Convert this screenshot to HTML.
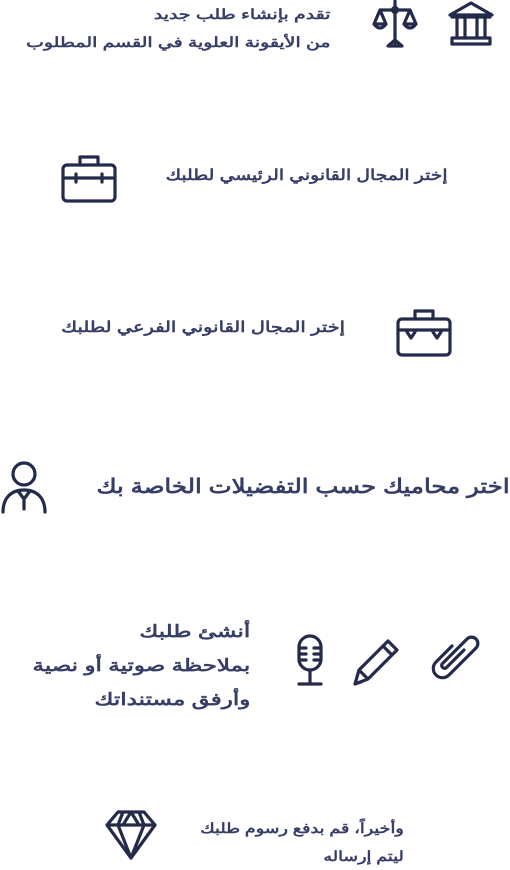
<!DOCTYPE html>
<html><head><meta charset="utf-8"><style>
body{margin:0;width:510px;height:861px;background:#fff;position:relative;overflow:hidden;font-family:"Liberation Sans","Noto Sans CJK SC",sans-serif;color:#363d66}
.t{position:absolute;direction:rtl;text-align:right;white-space:nowrap;font-weight:bold;transform-origin:right top}
svg{position:absolute;fill:none;stroke:#232a4a;stroke-width:3.2;stroke-linecap:round;stroke-linejoin:round}
</style></head><body>
<div class="t" style="right:180px;top:0;font-size:14px;line-height:28px;transform:scaleX(1.35)">تقدم بإنشاء طلب جديد<br>من الأيقونة العلوية في القسم المطلوب</div>
<svg style="left:370px;top:0" width="50" height="50" viewBox="0 0 50 50"><path d="M25 1V44M18 46h14l-7-6zM10 10h30M10 10l-6 14h12zM40 10l-6 14h12zM4 24q6 8 12 0M34 24q6 8 12 0"/><circle cx="25" cy="10" r="2.5"/></svg>
<svg style="left:446px;top:0" width="50" height="50" viewBox="0 0 50 50"><path d="M4 15L25 3l21 12zM6 15v2h38v-2M11 18v20M19 18v20M31 18v20M39 18v20M6 38h38v6H6z"/></svg>
<div class="t" style="right:62px;top:166px;font-size:15px;transform:scaleX(1.25)">إختر المجال القانوني الرئيسي لطلبك</div>
<svg style="left:60px;top:152px" width="58" height="52" viewBox="0 0 58 52"><rect x="3" y="13" width="52" height="36" rx="4"/><path d="M20 13V5h18v8M3 26h52M16 22v8M42 22v8"/></svg>
<div class="t" style="right:165px;top:318px;font-size:15px;transform:scaleX(1.29)">إختر المجال القانوني الفرعي لطلبك</div>
<svg style="left:395px;top:306px" width="58" height="52" viewBox="0 0 58 52"><rect x="3" y="13" width="52" height="36" rx="4"/><path d="M20 13V5h18v8M3 24h52M12 26l4 6 4-6M38 26l4 6 4-6"/></svg>
<div class="t" style="right:0;top:474px;font-size:20px;transform:scaleX(1.22)">اختر محاميك حسب التفضيلات الخاصة بك</div>
<svg style="left:0;top:460px" width="50" height="54" viewBox="0 0 50 54"><circle cx="24" cy="14" r="11"/><path d="M3 52c0-14 8-22 21-22s21 8 21 22M18 31l6 8 6-8M24 39v10"/></svg>
<div class="t" style="right:260px;top:615px;font-size:17px;line-height:34px;transform:scaleX(1.35)">أنشئ طلبك<br>بملاحظة صوتية أو نصية<br>وأرفق مستنداتك</div>
<svg style="left:295px;top:634px" width="30" height="54" viewBox="0 0 30 54"><rect x="4" y="2" width="22" height="34" rx="11"/><path d="M4 14h7M19 14h7M4 20h7M19 20h7M4 26h7M19 26h7M15 36v14M4 50h22"/></svg>
<svg style="left:350px;top:634px" width="54" height="54" viewBox="0 0 54 54"><path d="M5 50l4-14L38 7l9 9-29 29zM9 36l9 9M33 12l9 9M5 50l6-2"/></svg>
<svg style="left:428px;top:632px" width="58" height="56" viewBox="0 0 58 56"><path d="M24 14L8 30a9 9 0 0 0 13 13L48 16a6 6 0 0 0-9-9L14 32a3 3 0 0 0 4 4l18-18"/></svg>
<div class="t" style="right:106px;top:814px;font-size:14px;line-height:28px;transform:scaleX(1.25)">وأخيراً، قم بدفع رسوم طلبك<br>ليتم إرساله</div>
<svg style="left:104px;top:808px" width="54" height="54" viewBox="0 0 54 54"><path d="M14 4h26l11 13-24 33L3 17zM3 17h48M19 4l-5 13 13 33 13-33-5-13M27 4l-8 13M27 4l8 13"/></svg>
</body></html>
